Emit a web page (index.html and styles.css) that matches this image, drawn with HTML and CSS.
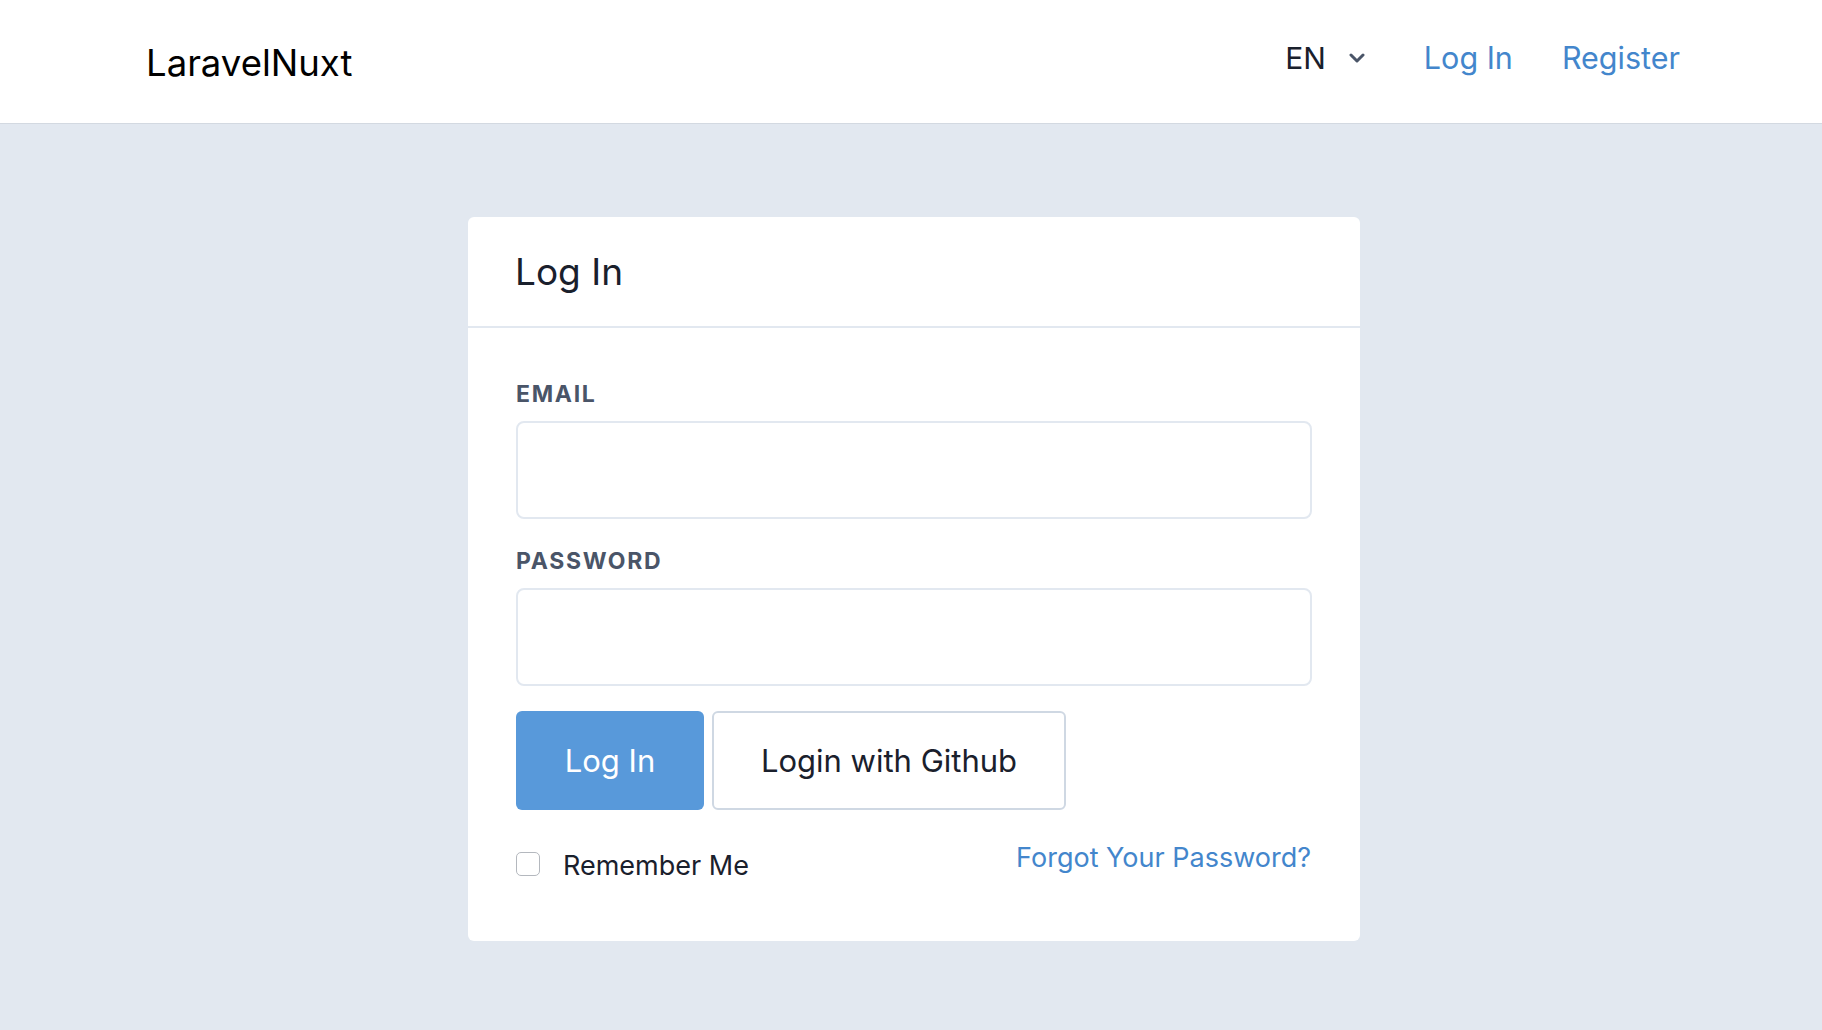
FILE: index.html
```html
<!DOCTYPE html>
<html lang="en">
<head>
<meta charset="utf-8">
<title>LaravelNuxt</title>
<link rel="stylesheet" href="styles.css">
</head>
<body>
<header class="topbar">
  <a class="brand" href="#">LaravelNuxt</a>
  <nav class="nav">
    <div class="lang">
      <span class="lang-code">EN</span>
      <svg class="chev" width="16" height="10" viewBox="0 0 16 10"><path d="M2 2 L8 8 L14 2" fill="none" stroke="#4a5568" stroke-width="3" stroke-linecap="round" stroke-linejoin="round"/></svg>
    </div>
    <a class="nav-link login" href="#">Log In</a>
    <a class="nav-link" href="#">Register</a>
  </nav>
</header>
<main class="main">
  <section class="card">
    <div class="card-head">
      <h1 class="card-title">Log In</h1>
    </div>
    <form class="card-body">
      <label class="label">EMAIL</label>
      <input class="input" type="email">
      <label class="label label-2">PASSWORD</label>
      <input class="input" type="password">
      <div class="buttons">
        <button type="button" class="btn btn-primary">Log In</button>
        <button type="button" class="btn btn-outline">Login with Github</button>
      </div>
      <div class="row">
        <label class="remember"><span class="checkbox"></span>Remember Me</label>
        <a class="forgot" href="#">Forgot Your Password?</a>
      </div>
    </form>
  </section>
</main>
</body>
</html>
```
FILE: styles.css
```css
* { box-sizing: border-box; }
html, body { margin: 0; padding: 0; }
body {
  background: #e2e8f0;
  font-family: Inter, "Noto Sans", "Liberation Sans", sans-serif;
  color: #1a202c;
  height: 1030px;
  overflow: hidden;
}
a { text-decoration: none; }
.topbar {
  height: 124px;
  background: #fff;
  border-bottom: 1px solid #d3d9e1;
  display: flex;
  align-items: center;
  justify-content: space-between;
  padding: 0 142px 0 146px;
}
.brand {
  font-size: 36.5px;
  color: #000;
  line-height: 46px;
  margin-top: 2px;
}
.nav {
  display: flex;
  align-items: center;
  padding-bottom: 8px;
}
.lang { display: flex; align-items: center; }
.lang-code { font-size: 30px; line-height: 40px; color: #1a202c; }
.chev { margin-left: 23px; }
.nav-link { font-size: 30.5px; line-height: 40px; color: #4386cc; }
.login { margin-left: 59px; margin-right: 49px; }
.main { padding-top: 93px; }
.card {
  width: 892px;
  margin-left: 468px;
  background: #fff;
  border-radius: 6px;
}
.card-head {
  height: 111px;
  border-bottom: 2px solid #e2e8f0;
  display: flex;
  align-items: center;
  padding: 0 47px;
}
.card-title {
  margin: 0;
  font-size: 37px;
  font-weight: 400;
  line-height: 48px;
  color: #1a202c;
}
.card-body {
  padding: 52px 48px 58px 48px;
  display: flex;
  flex-direction: column;
}
.label {
  font-size: 23px;
  font-weight: 700;
  line-height: 28px;
  letter-spacing: 1.7px;
  color: #4a5568;
  margin-bottom: 13px;
}
.label-2 { margin-top: 28px; }
.input {
  width: 796px;
  height: 98px;
  border: 2px solid #e2e8f0;
  border-radius: 8px;
  background: #fff;
  font-size: 28px;
  padding: 0 20px;
  outline: none;
}
.buttons {
  display: flex;
  gap: 8px;
  margin-top: 25px;
}
.btn {
  height: 99px;
  font-family: Inter, "Noto Sans", "Liberation Sans", sans-serif;
  font-size: 31px;
  border-radius: 6px;
  padding: 0;
  flex: none;
}
.btn-primary {
  width: 188px;
  background: #5899da;
  color: #fff;
  border: none;
}
.btn-outline {
  width: 354px;
  background: #fff;
  color: #1a202c;
  border: 2px solid #cfd8e3;
}
.row {
  display: flex;
  justify-content: space-between;
  align-items: flex-start;
  margin-top: 31px;
}
.remember {
  display: flex;
  align-items: center;
  margin-top: 8px;
  font-size: 27px;
  line-height: 34px;
  color: #1a202c;
}
.checkbox {
  width: 24px;
  height: 24px;
  border: 1.5px solid #b4b8be;
  border-radius: 5px;
  margin-right: 23px;
  margin-top: -4px;
  background: #fff;
  flex: none;
}
.forgot {
  font-size: 27px;
  line-height: 34px;
  color: #4386cc;
  margin-right: 1px;
}
```
